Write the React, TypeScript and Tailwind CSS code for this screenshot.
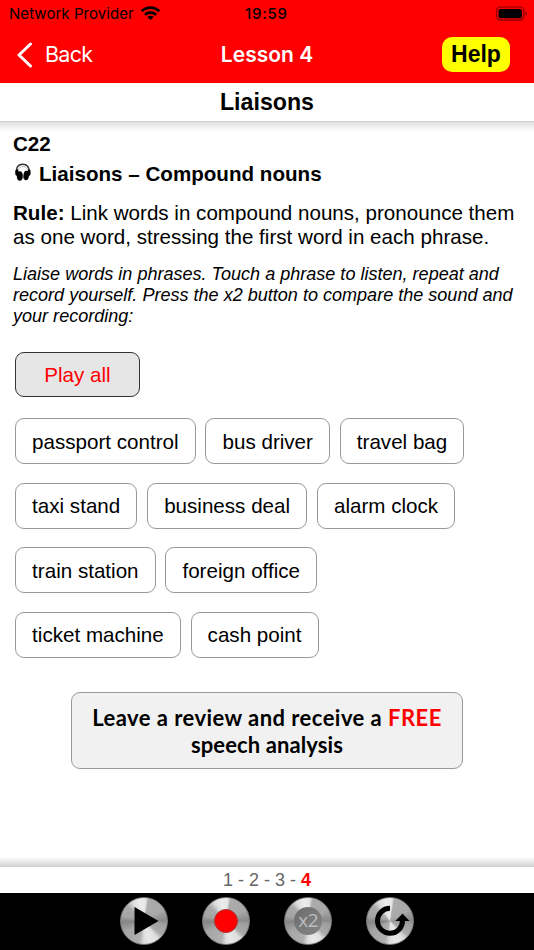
import type { ReactNode } from 'react'

const phraseRows = [
  ['passport control', 'bus driver', 'travel bag'],
  ['taxi stand', 'business deal', 'alarm clock'],
  ['train station', 'foreign office'],
  ['ticket machine', 'cash point'],
]

function StatusBar() {
  return (
    <div className="flex h-[28px] items-center text-[15px] text-black font-[Inter,sans-serif]">
      <div className="flex w-[245px] items-center pl-[9px]">
        <span className="whitespace-nowrap tracking-[0.05px]">Network Provider</span>
        <svg className="ml-[7px] h-[14px] w-[19px] -mt-[2px]" viewBox="0 0 19 14" fill="none" stroke="currentColor" strokeWidth="2.800">
          <path d="M.8 5.200a12.400 12.400 0 0 1 17.400 0" />
          <path d="M3.900 8.800a8 8 0 0 1 11.200 0" />
          <path d="M9.500 14 6.300 11a4.600 4.600 0 0 1 6.400 0z" fill="currentColor" stroke="none" />
        </svg>
      </div>
      <span className="font-medium tracking-[0.75px]">19:59</span>
      <svg className="ml-auto mr-[6px] -mt-px h-[15px] w-[33px]" viewBox="0 0 33 15">
        <rect x="1.500" y="1" width="27.500" height="13.200" rx="4" fill="none" stroke="#850000" strokeWidth="1.200" />
        <rect x="3.500" y="3" width="23.500" height="9.200" rx="2" />
        <path d="M30.500 5.200q3 2.400 0 4.800z" fill="#850000" />
      </svg>
    </div>
  )
}

function NavBar() {
  return (
    <div className="grid h-[53px] grid-cols-[1fr_auto_1fr] items-center font-[Inter,sans-serif] text-white">
      <button className="flex items-center pl-[15px]">
        <svg className="h-[26px] w-[18px]" viewBox="0 0 18 26" fill="none" stroke="currentColor" strokeWidth="3" strokeLinecap="round" strokeLinejoin="round">
          <path d="M15.500 2 4 13l11.500 11" />
        </svg>
        <span className="ml-[12px] text-[21.500px] tracking-[-0.7px]">Back</span>
      </button>
      <h1 className="text-[21px] font-semibold">Lesson 4</h1>
      <button className="mr-[24px] flex h-[35px] w-[68px] items-center justify-center justify-self-end rounded-[10px] bg-[#ffff00] -mt-px font-['Liberation_Sans',sans-serif] text-[23px] font-bold text-black">
        Help
      </button>
    </div>
  )
}

function HeadphonesIcon() {
  return (
    <svg className="mr-[8px] h-[19px] w-[18px] -mt-[5px]" viewBox="0 0 18 19">
      <path d="M3.500 9C3 4 5.500 1.300 9.700 1.300S16.500 4 16.200 9" fill="none" stroke="#333" strokeWidth="1.500" />
      <path d="M5.500 7C6 4.500 7.500 3.500 9.700 3.500S13.800 4.500 14.500 7" fill="none" stroke="#aaa" strokeWidth=".8" />
      <ellipse cx="6.800" cy="13" rx="3" ry="4.700" />
      <ellipse cx="13.200" cy="12.500" rx="2.800" ry="4.700" transform="rotate(8 13.200 12.500)" />
      <ellipse cx="3.900" cy="9.500" rx="1.700" ry="3.300" />
      <ellipse cx="16.100" cy="9.500" rx="1.500" ry="3.300" />
    </svg>
  )
}

function MetalButton({ label, children }: { label: string; children: ReactNode }) {
  return (
    <button
      aria-label={label}
      className="flex size-[48px] items-center justify-center rounded-full border border-[#777] bg-[conic-gradient(#e8e8e8_0deg,#e2e2e2_6deg,#acacac_12deg,#a8a8a8_60deg,#8a8a8a_88deg,#a0a0a0_100deg,#aaa_128deg,#dedede_142deg,#e8e8e8_165deg,#dedede_180deg,#b0b0b0_194deg,#a5a5a5_240deg,#858585_268deg,#a4a4a4_284deg,#aaa_312deg,#dcdcdc_328deg,#ececec_348deg,#e8e8e8_360deg)]"
    >
      {children}
    </button>
  )
}

export default function App() {
  return (
    <div className="flex h-[950px] w-[534px] flex-col overflow-hidden bg-white font-['Liberation_Sans',Arial,sans-serif] text-black">
      <header className="h-[83px] shrink-0 bg-[#ff0000]">
        <StatusBar />
        <NavBar />
      </header>
      <div className="flex h-[39px] shrink-0 items-center justify-center border-b border-[#d0d0d0] pt-px">
        <h2 className="text-[23.200px] font-bold">Liaisons</h2>
      </div>
      <div className="h-[10px] shrink-0 bg-linear-to-b from-[#e0e0e0] to-white" />

      <main className="flex-1 pl-[13px]">
        <div className="text-[20.600px]">
          <p className="h-[28px] font-bold leading-[23px]">C22</p>
          <h3 className="flex h-[29px] items-center whitespace-nowrap font-bold">
            <HeadphonesIcon />
            <span>Liaisons – Compound nouns</span>
          </h3>
          <p className="mt-[12px] whitespace-nowrap leading-[23.700px]">
            <b>Rule:</b> Link words in compound nouns, pronounce them
            <br />
            as one word, stressing the first word in each phrase.
          </p>
        </div>
        <p className="mt-[16px] whitespace-nowrap text-[18.060px] italic leading-[20.800px]">
          Liaise words in phrases. Touch a phrase to listen, repeat and
          <br />
          record yourself. Press the x2 button to compare the sound and
          <br />
          your recording:
        </p>

        <div className="ml-[2px] text-[20.600px]">
          <button className="mt-[25px] flex h-[45px] w-[125px] items-center justify-center rounded-[9px] border border-[#333] bg-[#e6e6e6] pt-[2px] text-[#ff0000]">
            Play all
          </button>
          <div className="mt-[21.700px] flex flex-col gap-[18.500px]">
            {phraseRows.map((row) => (
              <div key={row[0]} className="flex gap-[9.700px]">
                {row.map((phrase) => (
                  <button
                    key={phrase}
                    className="flex h-[46px] items-center whitespace-nowrap rounded-[9px] border border-[#999] bg-white px-[16.100px] pt-px"
                  >
                    {phrase}
                  </button>
                ))}
              </div>
            ))}
          </div>
        </div>

        <button className="ml-[58px] mt-[34.500px] h-[77px] w-[392px] rounded-[9px] border border-[#999] bg-[#f1f1f1] font-[Lato,sans-serif] text-[22px] font-bold leading-[27px] tracking-[0.45px]">
          Leave a review and receive a <span className="text-[#ff0000]">FREE</span>
          <br />
          <span className="tracking-[0.1px]">speech analysis</span>
        </button>
      </main>

      <footer className="shrink-0">
        <div className="h-[10px] bg-linear-to-b from-white to-[#d0d0d0]" />
        <nav className="flex h-[26px] items-center justify-center pt-px text-[18px] text-[#666]">
          <span>
            1 - 2 - 3 - <b className="text-[#ff0000]">4</b>
          </span>
        </nav>
        <div className="flex h-[57px] items-center justify-center gap-[34.300px] bg-black pb-px">
          <MetalButton label="Play">
            <svg className="size-[46px] shrink-0" viewBox="0 0 46 46">
              <path d="M13.500 9v28L37.500 23z" />
            </svg>
          </MetalButton>
          <MetalButton label="Record">
            <span className="size-[24px] rounded-full border border-[#a33] bg-[#ff0000]" />
          </MetalButton>
          <MetalButton label="Play both">
            <span className="flex size-[28px] items-center justify-center rounded-full bg-[linear-gradient(135deg,#6c6c6c,#858585)] pb-px font-['Open_Sans',sans-serif] text-[19px] tracking-[-0.5px] text-[#bdbdbd]">
              x2
            </span>
          </MetalButton>
          <MetalButton label="Repeat">
            <svg className="size-[46px] shrink-0" viewBox="0 0 46 46">
              <path d="M23 10.300A12.500 12.500 0 1 0 35.500 22.500" fill="none" stroke="#000" strokeWidth="5" />
              <path d="M35.500 15.500 42.500 23h-14z" />
            </svg>
          </MetalButton>
        </div>
      </footer>
    </div>
  )
}
